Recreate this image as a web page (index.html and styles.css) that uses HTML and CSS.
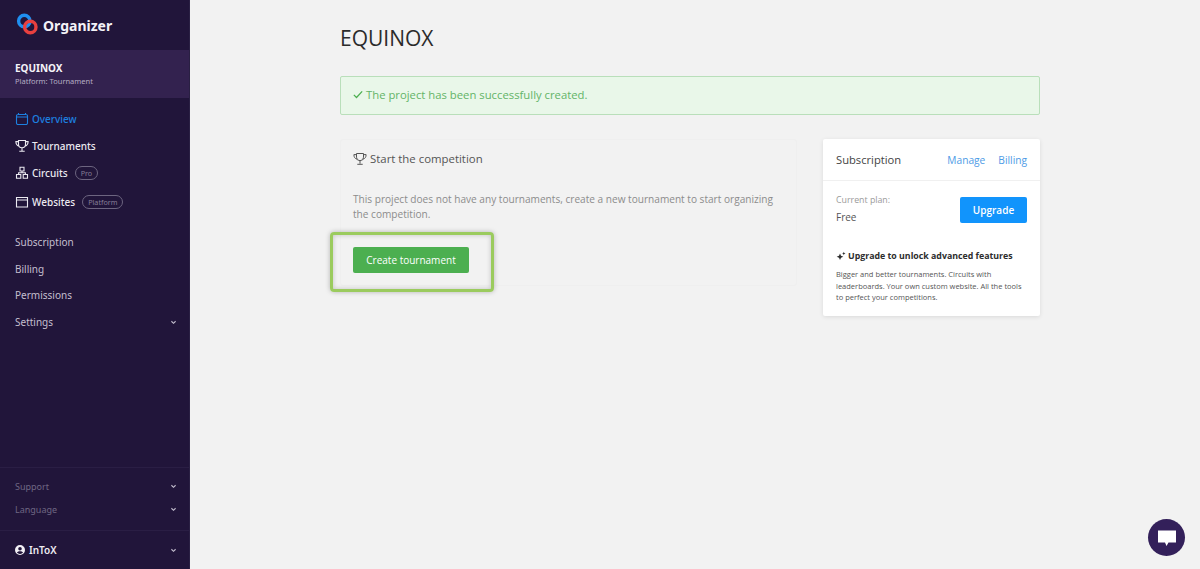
FILE: index.html
```html
<!DOCTYPE html>
<html lang="en">
<head>
<meta charset="utf-8">
<title>EQUINOX - Organizer</title>
<link rel="stylesheet" href="styles.css">
</head>
<body>
<div class="app">
  <aside class="sidebar">
    <div class="brand">
      <svg class="brand-logo" width="22" height="22" viewBox="0 0 22 22"><circle cx="8.300" cy="8" r="5.700" fill="none" stroke="#1f8ff0" stroke-width="3.400"/><circle cx="14.300" cy="14" r="5.700" fill="none" stroke="#e8403f" stroke-width="3.400"/></svg>
      <span class="brand-name">Organizer</span>
    </div>
    <div class="project">
      <div class="project-name">EQUINOX</div>
      <div class="project-sub">Platform: Tournament</div>
    </div>
    <nav class="nav-main">
      <a class="nav-item active"><svg class="nav-icon" viewBox="0 0 14 14"><path d="M3 2.500h8a1.500 1.500 0 0 1 1.500 1.500v7a1.500 1.500 0 0 1-1.500 1.500H3A1.500 1.500 0 0 1 1.500 11V4A1.500 1.500 0 0 1 3 2.500zM1.500 5h11M3.500 1v1.500M10.500 1v1.500"/></svg>Overview</a>
      <a class="nav-item"><svg class="nav-icon" viewBox="0 0 14 14"><path d="M3.500 1.500h7v3.700a3.500 3.500 0 0 1-7 0zM3.500 2.600H.9c0 2.600 1 4 3.100 4.500M10.500 2.600h2.600c0 2.600-1 4-3.100 4.500M7 8.700v3M4.300 12.300h5.400"/></svg>Tournaments</a>
      <a class="nav-item"><svg class="nav-icon" viewBox="0 0 14 14"><path d="M5 1.200h4v3.800H5zM1.500 8.500h4.300v3.800H1.500zM8.200 8.500h4.300v3.800H8.200zM7 5v1.800M3.600 8.500V6.800h6.800v1.700"/></svg>Circuits<span class="pill">Pro</span></a>
      <a class="nav-item nav-item-sites"><svg class="nav-icon" viewBox="0 0 14 14"><path d="M1.500 2.500h11v9.500h-11zM1.500 5h11"/></svg>Websites<span class="pill">Platform</span></a>
    </nav>
    <nav class="nav-sub">
      <a class="sub-item">Subscription</a>
      <a class="sub-item">Billing</a>
      <a class="sub-item">Permissions</a>
      <a class="sub-item">Settings<svg class="chev" viewBox="0 0 8 6"><path d="M1.500 1.500 4 4l2.500-2.500"/></svg></a>
    </nav>
    <div class="side-bottom">
      <div class="side-links">
        <a class="dim-item">Support<svg class="chev" viewBox="0 0 8 6"><path d="M1.500 1.500 4 4l2.500-2.500"/></svg></a>
        <a class="dim-item">Language<svg class="chev" viewBox="0 0 8 6"><path d="M1.500 1.500 4 4l2.500-2.500"/></svg></a>
      </div>
      <div class="user">
        <svg class="user-icon" viewBox="0 0 10 10"><path fill-rule="evenodd" d="M5 0a5 5 0 1 1 0 10A5 5 0 0 1 5 0zm0 2a1.800 1.800 0 1 0 0 3.600A1.800 1.800 0 0 0 5 2zM1.900 7.600A3.900 3.900 0 0 0 5 9a3.900 3.900 0 0 0 3.100-1.400C7.400 6.700 6.300 6.300 5 6.300s-2.400.4-3.100 1.300z"/></svg>
        <span class="user-name">InToX</span>
        <svg class="chev" viewBox="0 0 8 6"><path d="M1.500 1.500 4 4l2.500-2.500"/></svg>
      </div>
    </div>
  </aside>
  <main class="main">
    <div class="content">
      <h1 class="title">EQUINOX</h1>
      <div class="alert"><svg class="alert-check" viewBox="0 0 12 10"><path d="M1 5.500 4.200 8.600 11 1.300"/></svg>The project has been successfully created.</div>
      <div class="columns">
        <section class="card-start">
          <h2 class="start-title"><svg class="start-icon" viewBox="0 0 14 14"><path d="M3.500 1.500h7v3.700a3.500 3.500 0 0 1-7 0zM3.500 2.600H.9c0 2.600 1 4 3.100 4.500M10.500 2.600h2.600c0 2.600-1 4-3.100 4.500M7 8.700v3M4.300 12.300h5.400"/></svg>Start the competition</h2>
          <p class="start-text">This project does not have any tournaments, create a new tournament to start organizing the competition.</p>
          <div class="start-action">
            <button class="btn-create">Create tournament</button>
            <div class="highlight"></div>
          </div>
        </section>
        <section class="card-sub">
          <div class="sub-head">
            <span class="sub-title">Subscription</span>
            <a class="sub-link">Manage</a>
            <a class="sub-link">Billing</a>
          </div>
          <div class="sub-body">
            <div class="plan">
              <div>
                <div class="plan-label">Current plan:</div>
                <div class="plan-value">Free</div>
              </div>
              <button class="btn-upgrade">Upgrade</button>
            </div>
            <div class="promo-title"><svg class="promo-icon" viewBox="0 0 10 10"><path d="M4 2.500l1 2.300 2.300 1-2.300 1-1 2.200-1-2.200-2.300-1 2.300-1zM7.800.8l.5 1.200 1.200.5-1.200.5-.5 1.200-.5-1.200-1.200-.5 1.200-.5z"/></svg>Upgrade to unlock advanced features</div>
            <p class="promo-text">Bigger and better tournaments. Circuits with leaderboards. Your own custom website. All the tools to perfect your competitions.</p>
          </div>
        </section>
      </div>
    </div>
    <div class="chat"><svg width="20" height="18" viewBox="0 0 20 18"><path d="M1 1.500h18v12h-7.500L9.500 17l-1.500-3.500H1z" fill="#fff"/></svg></div>
  </main>
</div>
</body>
</html>
```
FILE: styles.css
```css
* { box-sizing: border-box; }
html, body { margin: 0; height: 100%; }
body {
  font-family: "Open Sans", "Noto Sans", sans-serif;
  background: #f2f2f2;
  color: #333;
  overflow: hidden;
}
.app { display: flex; height: 569px; }
.sidebar {
  width: 190px;
  flex: none;
  background: #21153a;
  border-right: 1px solid #2a2043;
  display: flex;
  flex-direction: column;
  color: #fff;
  font-family: "Noto Sans", "Open Sans", sans-serif;
}
.brand {
  height: 50px;
  display: flex;
  align-items: center;
  padding-left: 16px;
  gap: 5px;
}
.brand-logo { display: block; margin-top: -2px; }
.brand-name { font-size: 14px; font-weight: 700; margin-top: 1px; color: #f4f2f7; }
.project {
  height: 48px;
  background: #33224f;
  padding: 11px 15px 0;
}
.project-name { font-size: 10px; font-weight: 700; line-height: 15px; color: #f5f3f8; }
.project-sub { font-size: 7.500px; line-height: 11px; color: #b5adc4; }
.nav-main { padding-top: 7px; display: flex; flex-direction: column; }
.nav-item {
  height: 27px;
  display: flex;
  align-items: center;
  padding-left: 15px;
  font-size: 10px;
  font-weight: 500;
  color: #eceaf1;
}
.nav-item-sites { height: 31px; }
.nav-item.active { color: #1d80e0; }
.nav-icon {
  width: 14px;
  height: 14px;
  margin-right: 3px;
  fill: none;
  stroke: currentColor;
  stroke-width: 1.100;
}
.pill {
  margin-left: 7px;
  border: 1px solid #6d6580;
  border-radius: 8px;
  height: 14px;
  padding: 0 5px;
  font-size: 7.200px;
  line-height: 12px;
  font-weight: 400;
  color: #857d96;
}
.nav-sub { padding-top: 11.500px; display: flex; flex-direction: column; }
.sub-item {
  height: 26.800px;
  display: flex;
  align-items: center;
  justify-content: space-between;
  padding: 0 12px 0 15px;
  font-size: 10px;
  color: #c4bfcf;
}
.chev {
  width: 7px;
  height: 5px;
  fill: none;
  stroke: #c4bfcf;
  stroke-width: 1.300;
}
.side-bottom { margin-top: auto; }
.side-links {
  border-top: 1px solid #2a1e44;
  padding-top: 7px;
  height: 63px;
}
.dim-item {
  height: 23px;
  display: flex;
  align-items: center;
  justify-content: space-between;
  padding: 0 12px 0 15px;
  font-size: 9px;
  color: #6f6783;
}
.user {
  border-top: 1px solid #2a1e44;
  height: 39px;
  display: flex;
  align-items: center;
  padding: 0 12px 0 15px;
}
.user-icon { width: 10px; height: 10px; fill: #f3f1f6; margin-right: 4px; }
.user-name { font-size: 10px; font-weight: 600; color: #eeecf2; flex: 1; }
.main { flex: 1; position: relative; }
.content { width: 700px; margin-left: 150px; padding-top: 24px; }
.title {
  margin: 0;
  font-size: 21px;
  line-height: 28px;
  font-weight: 400;
  color: #2b2b2b;
}
.alert {
  margin-top: 24px;
  height: 39px;
  background: #e9f7e9;
  border: 1px solid #b9dfba;
  border-radius: 2px;
  padding-left: 12px;
  padding-bottom: 3px;
  display: flex;
  align-items: center;
  font-size: 11.300px;
  color: #63b467;
}
.alert-check {
  width: 10px;
  height: 9px;
  margin-right: 3px;
  fill: none;
  stroke: #4caf50;
  stroke-width: 1.500;
}
.columns { display: flex; gap: 26px; margin-top: 24px; align-items: flex-start; }
.card-start {
  width: 457px;
  height: 147px;
  background: #f2f2f2;
  border: 1px solid #efefef;
  border-radius: 3px;
  padding: 11px 12px 12px;
}
.start-title {
  margin: 0;
  font-size: 11.400px;
  line-height: 15px;
  font-weight: 400;
  color: #555;
  display: flex;
  align-items: center;
}
.start-icon {
  width: 14px;
  height: 14px;
  margin-right: 3px;
  fill: none;
  stroke: #555;
  stroke-width: 1;
}
.start-text {
  margin: 26px 0 0;
  font-size: 10.100px;
  line-height: 15px;
  color: #8c8c8c;
}
.start-action { position: relative; margin-top: 25px; }
.btn-create {
  display: block;
  width: 116px;
  height: 26px;
  border: 0;
  border-radius: 2px;
  background: #4caf50;
  color: #fff;
  font: 500 10px "Open Sans", "Noto Sans", sans-serif;
}
.highlight {
  position: absolute;
  left: -23px;
  top: -15px;
  width: 164px;
  height: 60px;
  border: 3px solid #9bcb5e;
  border-radius: 4px;
  box-shadow: 0 0 5px rgba(0,0,0,.25), inset 0 0 5px rgba(0,0,0,.2);
}
.card-sub {
  width: 217px;
  height: 177px;
  background: #fff;
  border-radius: 2px;
  box-shadow: 0 1px 4px rgba(0,0,0,.1);
}
.sub-head {
  height: 42px;
  display: flex;
  align-items: center;
  padding: 0 13px 0 13px;
  border-bottom: 1px solid #f0f0f0;
  gap: 13px;
}
.sub-title { flex: 1; font-size: 11.200px; color: #444; }
.sub-link { font-size: 10.200px; color: #4d9be6; margin-top: 1px; }
.sub-body { padding: 0 13px; }
.plan {
  display: flex;
  justify-content: space-between;
  align-items: flex-start;
  padding-top: 12px;
}
.plan-label { font-size: 8.800px; line-height: 14px; color: #9a9a9a; }
.plan-value { font-size: 10px; line-height: 16px; margin-top: 2px; color: #555; }
.btn-upgrade {
  width: 67px;
  height: 26px;
  margin-top: 4px;
  border: 0;
  border-radius: 2px;
  background: #1194fc;
  color: #fff;
  font: 600 10px "Open Sans", "Noto Sans", sans-serif;
}
.promo-title {
  margin-top: 24px;
  display: flex;
  align-items: center;
  font-size: 8.800px;
  line-height: 14px;
  font-weight: 700;
  color: #2d2d2d;
}
.promo-icon { width: 10px; height: 10px; margin-right: 2px; fill: #2d2d2d; }
.promo-text {
  margin: 6px 0 0;
  font-size: 7.500px;
  line-height: 11.500px;
  color: #555;
}
.chat {
  position: absolute;
  right: 15px;
  bottom: 13px;
  width: 37px;
  height: 37px;
  border-radius: 50%;
  background: #33205a;
  display: flex;
  align-items: center;
  justify-content: center;
}
```
